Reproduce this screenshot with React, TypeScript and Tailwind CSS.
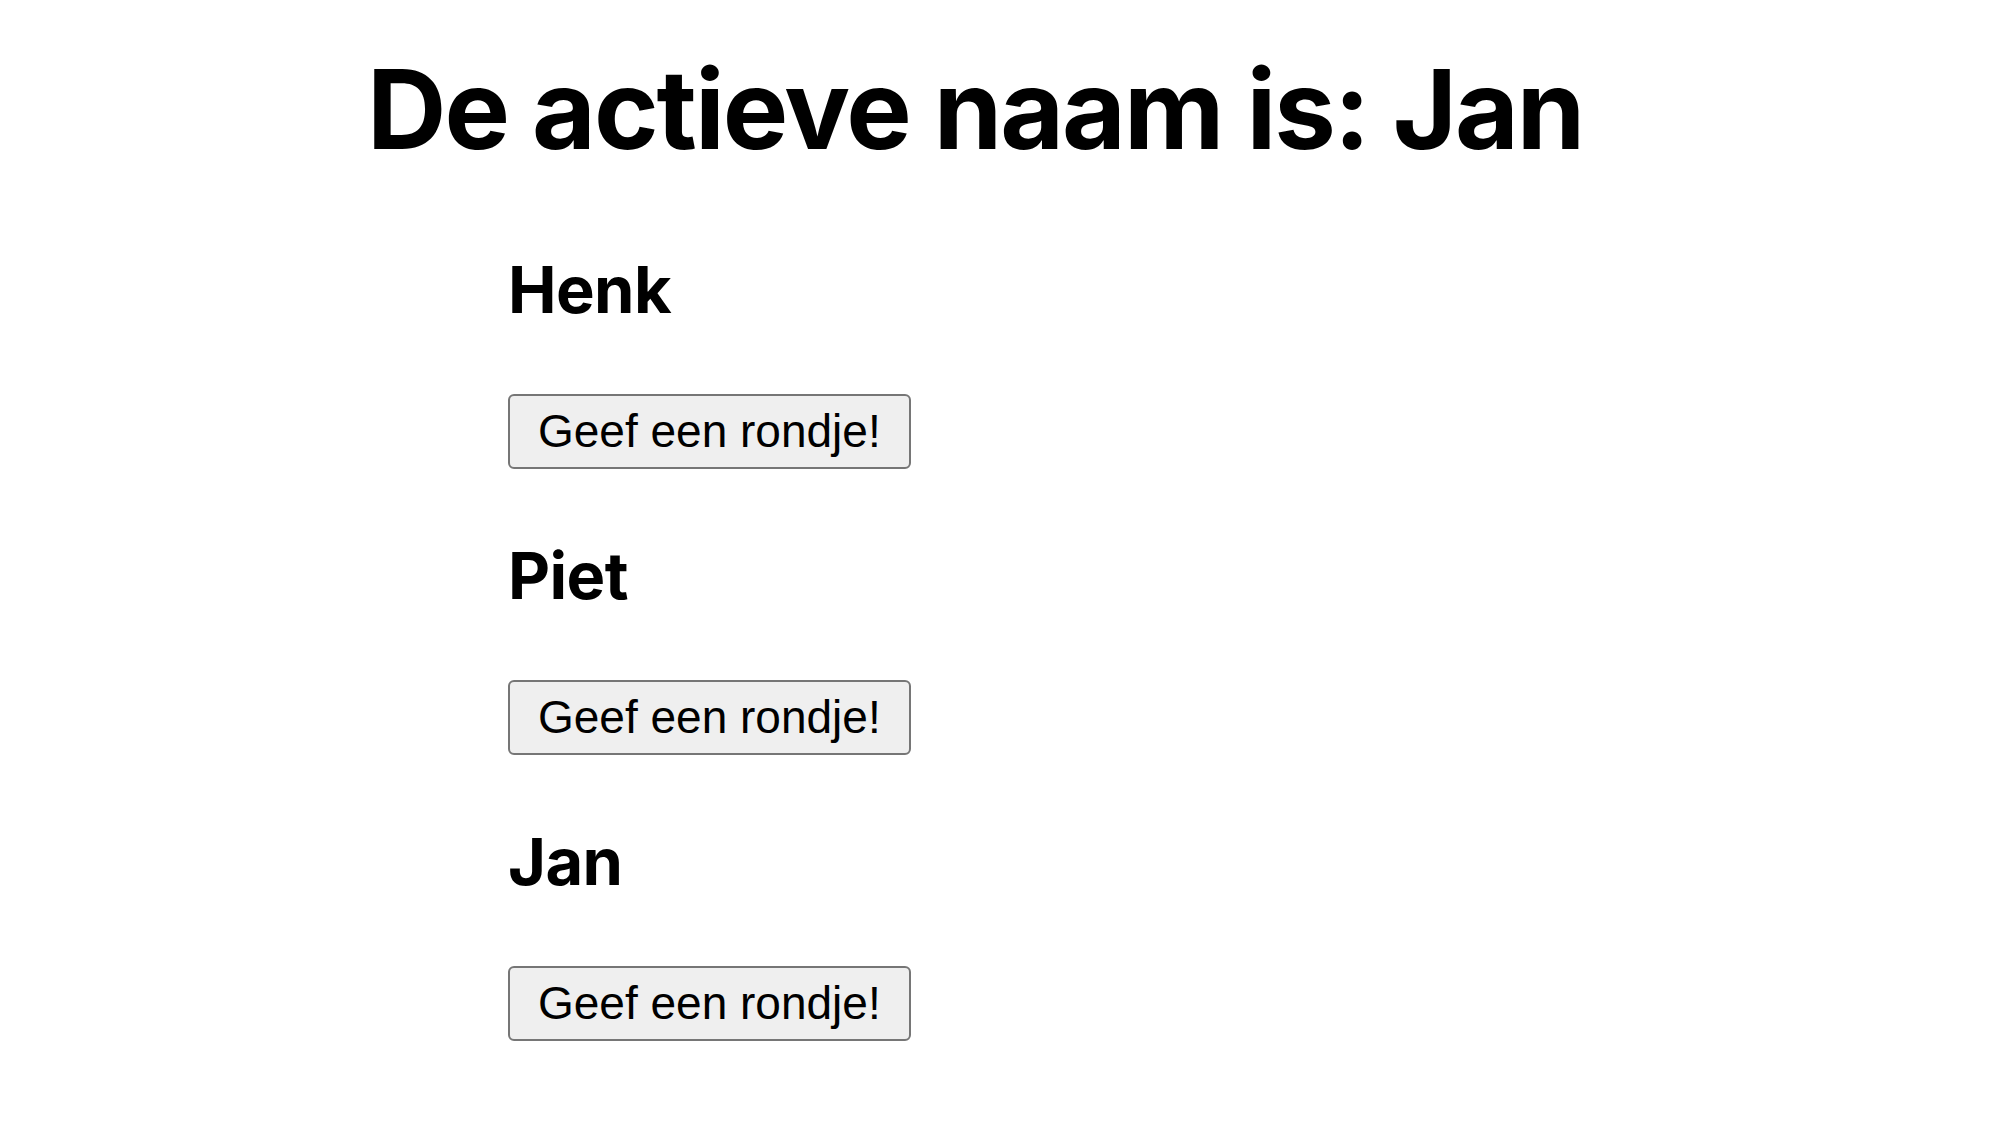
const people = ['Henk', 'Piet', 'Jan'];

export default function App() {
  const active = 'Jan';

  return (
    <div className="min-h-screen bg-white text-black pl-[367px] pt-[43px]">
      <h1 className="font-['Inter',sans-serif] font-bold text-[110px] leading-[133px] tracking-[-2px] mb-[74px]">
        De actieve naam is: {active}
      </h1>
      <div className="pl-[141px] flex flex-col">
        {people.map((name) => (
          <div key={name} className="flex flex-col items-start">
            <h3 className="font-['Inter',sans-serif] font-bold text-[65px] leading-[79px] tracking-[-0.6px] mb-[65px]">{name}</h3>
            <button className="font-['Liberation_Sans',Arial,sans-serif] text-[46px] leading-[53px] bg-[#efefef] border-2 border-[#767676] rounded-[6px] px-[28px] py-[9px] mb-[67px]">
              Geef een rondje!
            </button>
          </div>
        ))}
      </div>
    </div>
  );
}
